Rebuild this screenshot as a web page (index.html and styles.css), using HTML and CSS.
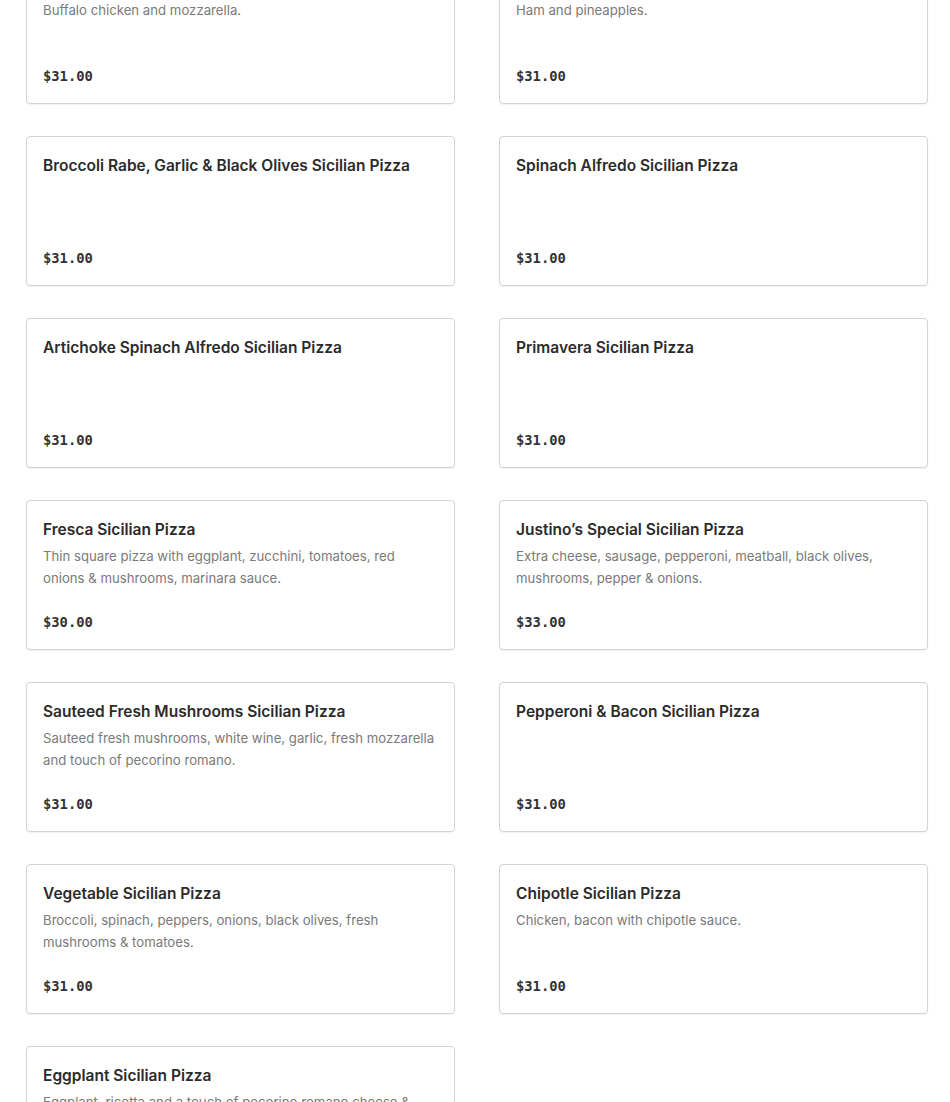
FILE: index.html
```html
<!DOCTYPE html>
<html>
<head>
<meta charset="utf-8">
<link rel="stylesheet" href="styles.css">
</head>
<body>
<div class="menu">
  <div class="card">
    <div class="title">Buffalo Chicken Sicilian Pizza</div>
    <div class="desc">Buffalo chicken and mozzarella.</div>
    <div class="price">$31.00</div>
  </div>
  <div class="card">
    <div class="title">Hawaiian Sicilian Pizza</div>
    <div class="desc">Ham and pineapples.</div>
    <div class="price">$31.00</div>
  </div>
  <div class="card">
    <div class="title">Broccoli Rabe, Garlic &amp; Black Olives Sicilian Pizza</div>
    <div class="price">$31.00</div>
  </div>
  <div class="card">
    <div class="title">Spinach Alfredo Sicilian Pizza</div>
    <div class="price">$31.00</div>
  </div>
  <div class="card">
    <div class="title">Artichoke Spinach Alfredo Sicilian Pizza</div>
    <div class="price">$31.00</div>
  </div>
  <div class="card">
    <div class="title">Primavera Sicilian Pizza</div>
    <div class="price">$31.00</div>
  </div>
  <div class="card">
    <div class="title">Fresca Sicilian Pizza</div>
    <div class="desc">Thin square pizza with eggplant, zucchini, tomatoes, red onions &amp; mushrooms, marinara sauce.</div>
    <div class="price">$30.00</div>
  </div>
  <div class="card">
    <div class="title">Justino’s Special Sicilian Pizza</div>
    <div class="desc">Extra cheese, sausage, pepperoni, meatball, black olives, mushrooms, pepper &amp; onions.</div>
    <div class="price">$33.00</div>
  </div>
  <div class="card">
    <div class="title">Sauteed Fresh Mushrooms Sicilian Pizza</div>
    <div class="desc">Sauteed fresh mushrooms, white wine, garlic, fresh mozzarella and touch of pecorino romano.</div>
    <div class="price">$31.00</div>
  </div>
  <div class="card">
    <div class="title">Pepperoni &amp; Bacon Sicilian Pizza</div>
    <div class="price">$31.00</div>
  </div>
  <div class="card">
    <div class="title">Vegetable Sicilian Pizza</div>
    <div class="desc">Broccoli, spinach, peppers, onions, black olives, fresh mushrooms &amp; tomatoes.</div>
    <div class="price">$31.00</div>
  </div>
  <div class="card">
    <div class="title">Chipotle Sicilian Pizza</div>
    <div class="desc">Chicken, bacon with chipotle sauce.</div>
    <div class="price">$31.00</div>
  </div>
  <div class="card">
    <div class="title">Eggplant Sicilian Pizza</div>
    <div class="desc">Eggplant, ricotta and a touch of pecorino romano cheese &amp; marinara sauce.</div>
    <div class="price">$31.00</div>
  </div>
</div>
</body>
</html>
```
FILE: styles.css
```css
html, body {
  margin: 0;
  padding: 0;
  background: #fff;
}
body {
  font-family: Inter, "Liberation Sans", sans-serif;
  overflow: hidden;
}
.menu {
  display: grid;
  grid-template-columns: 429px 429px;
  column-gap: 44px;
  row-gap: 32px;
  margin-top: -46px;
  padding-left: 26px;
}
.card {
  box-sizing: border-box;
  height: 150px;
  border: 1px solid #d3d3d3;
  border-radius: 4px;
  padding: 17px 16px 17px 16px;
  display: flex;
  flex-direction: column;
  box-shadow: 0 1px 2px rgba(0,0,0,0.06);
}
.title {
  font-size: 15.5px;
  font-weight: 600;
  line-height: 24px;
  color: #2b2b2b;
}
.desc {
  margin-top: 3px;
  font-size: 13.2px;
  line-height: 22px;
  color: #7a7a7a;
}
.price {
  margin-top: auto;
  font-family: "DejaVu Sans Mono", "Liberation Mono", monospace;
  font-weight: bold;
  font-size: 13.8px;
  line-height: 20px;
  color: #333;
}
```
